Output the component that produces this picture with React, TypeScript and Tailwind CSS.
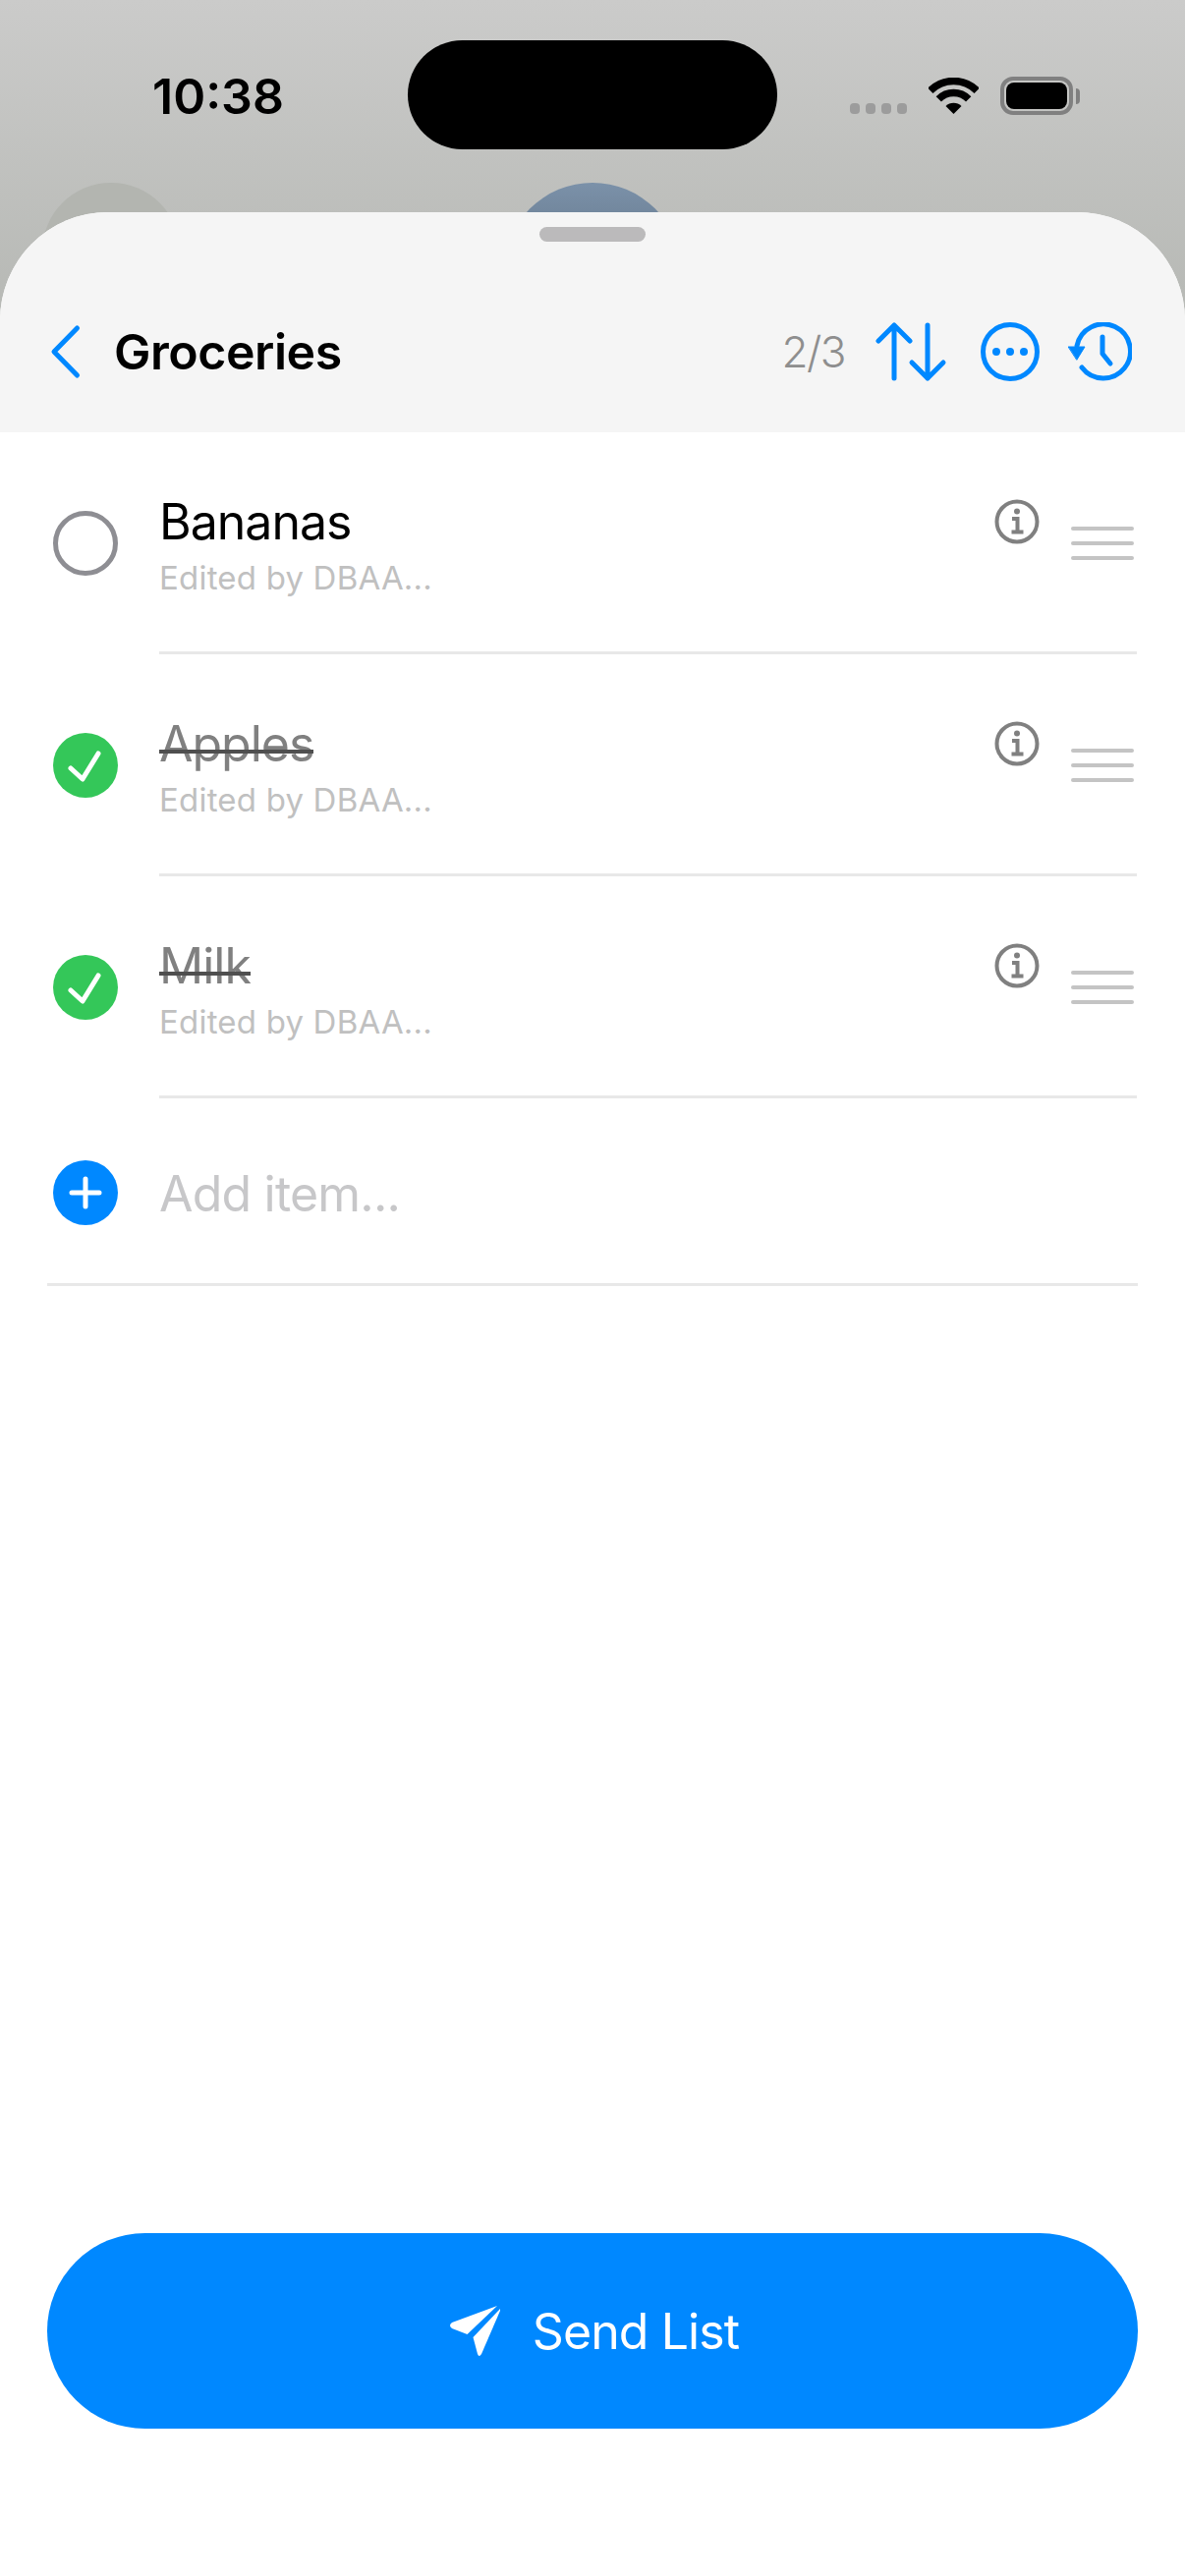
const items = [
	{ name: 'Bananas', done: false },
	{ name: 'Apples', done: true },
	{ name: 'Milk', done: true },
]

function Wifi() {
	return (
		<svg width="51" height="37" viewBox="0 0 51 37" fill="none" stroke="black" strokeWidth="7.5">
			<path d="M1.8 13.3 A33.5 33.5 0 0 1 49.2 13.3" />
			<path d="M10.3 21.8 A21.5 21.5 0 0 1 40.7 21.8" />
			<path d="M17.5 29 A11.3 11.3 0 0 1 33.5 29 L25.5 37 Z" fill="black" stroke="none" />
		</svg>
	)
}

function StatusBar() {
	return (
		<div className="relative h-[216px] shrink-0">
			<div className="absolute left-[43px] top-[186px] h-[140px] w-[140px] rounded-full bg-[#b3b5b0]" />
			<div className="absolute left-[513px] top-[186px] h-[180px] w-[180px] rounded-full bg-gradient-to-b from-[#7b91a9] to-[#4a5a68]" />
			<div className="relative flex items-start pl-[155px] pt-[41px]">
				<div className="w-[260px] pt-[27px] text-[50px] leading-[60px] font-semibold text-black">10:38</div>
				<div className="h-[111px] w-[376px] rounded-[56px] bg-black" />
				<div className="ml-[74px] flex gap-[6px] pt-[64px]">
					{[0, 1, 2, 3].map((i) => (
						<div key={i} className="h-[11px] w-[10px] rounded-[4px] bg-[#9c9c9c]" />
					))}
				</div>
				<div className="ml-[22px] pt-[38px]">
					<Wifi />
				</div>
				<div className="ml-[22px] flex items-center pt-[37px]">
					<div className="h-[39px] w-[74px] rounded-[13px] border-[4px] border-[#808080] p-[2px]">
						<div className="h-full w-full rounded-[8px] bg-black" />
					</div>
					<div className="ml-[3px] h-[16px] w-[4px] rounded-r-[4px] bg-[#808080]" />
				</div>
			</div>
		</div>
	)
}

function Header() {
	return (
		<div className="flex h-[224px] shrink-0 flex-col rounded-t-[110px] bg-[#f5f5f5]">
			<div className="mx-auto mt-[15px] h-[15px] w-[108px] rounded-full bg-[#bbbabb]" />
			<div className="flex items-center pt-[81px] pl-[49px]">
				<svg width="36" height="56" viewBox="0 0 36 56" fill="none" stroke="#0088ff" strokeWidth="5" strokeLinecap="round" strokeLinejoin="round">
					<path d="M29.5 4 L6 28 L29.5 52" />
				</svg>
				<div className="ml-[31px] flex-1 text-[50px] leading-[60px] font-semibold tracking-[-0.45px] text-black">Groceries</div>
				<div className="text-[44px] leading-[54px] font-light tracking-[-1.5px] text-[#8e8e8e]">2/3</div>
				<svg className="ml-[31px]" width="76" height="62" viewBox="0 0 76 62" fill="none" stroke="#0088ff" strokeWidth="5" strokeLinecap="round" strokeLinejoin="round">
					<path d="M19 58 V4 M3 20 L19 4 L35 20" />
					<path d="M53 4 V58 M37 42 L53 58 L69 42" />
				</svg>
				<svg className="ml-[31px]" width="60" height="60" viewBox="0 0 60 60" fill="none">
					<circle cx="30" cy="30" r="27.5" stroke="#0088ff" strokeWidth="5" />
					<circle cx="16" cy="30" r="4" fill="#0088ff" />
					<circle cx="30" cy="30" r="4" fill="#0088ff" />
					<circle cx="44" cy="30" r="4" fill="#0088ff" />
				</svg>
				<svg className="ml-[29px] mr-[54px]" width="65" height="60" viewBox="0 0 65 60" fill="none" stroke="#0088ff" strokeWidth="5" strokeLinecap="round" strokeLinejoin="round">
					<path d="M9 24 A27.5 27.5 0 1 1 14 46" />
					<path d="M0.5 25 L17 25 L9 38 Z" fill="#0088ff" strokeWidth="1" />
					<path d="M35 15 V32 L43 42" />
				</svg>
			</div>
		</div>
	)
}

function Row({ name, done }: { name: string; done: boolean }) {
	return (
		<div className="flex h-[226px] items-center pl-[54px]">
			{done ? (
				<div className="flex h-[66px] w-[66px] shrink-0 items-center justify-center rounded-full bg-[#34c759]">
					<svg width="36" height="36" viewBox="0 0 36 36" fill="none" stroke="white" strokeWidth="5" strokeLinecap="round" strokeLinejoin="round">
						<path d="M3 21 L15 32 L31 6" />
					</svg>
				</div>
			) : (
				<div className="h-[66px] w-[66px] shrink-0 rounded-full border-[5px] border-[#8e8e93]" />
			)}
			<div className="ml-[42px] mr-[49px] flex h-full flex-1 items-start border-b-[3px] border-[#e8e8e8]">
				<div className="flex-1 pt-[61px]">
					<div className="relative w-fit text-[50px] leading-[60px] tracking-[-1px]">
						<span className={done ? 'text-[#808080]' : 'text-black'}>{name}</span>
						{done && <div className="absolute left-0 right-0 top-[36px] h-[4px] bg-[#4f4f4f]" />}
					</div>
					<div className="mt-[7px] text-[33px] leading-[40px] tracking-[0.2px] text-[#c0c0c0]">Edited by DBAA...</div>
				</div>
				<svg className="mt-[68px]" width="46" height="46" viewBox="0 0 46 46" fill="none" stroke="#808080">
					<circle cx="23" cy="23" r="20.5" strokeWidth="4" />
					<circle cx="23" cy="12.5" r="3" fill="#808080" stroke="none" />
					<path d="M18 20 H23.5 V33 M17.5 33.5 H29.5" strokeWidth="4" />
				</svg>
				<div className="mt-[96px] mr-[3px] ml-[32px] flex w-[64px] flex-col gap-[11px]">
					<div className="h-[4px] rounded-full bg-[#c4c4c4]" />
					<div className="h-[4px] rounded-full bg-[#c4c4c4]" />
					<div className="h-[4px] rounded-full bg-[#c4c4c4]" />
				</div>
			</div>
		</div>
	)
}

export default function App() {
	return (
		<div className="flex h-[2622px] w-[1206px] flex-col overflow-hidden bg-gradient-to-b from-[#cbcbca] to-[#b6b8b4] bg-[length:100%_330px] bg-no-repeat font-['Inter',sans-serif]">
			<StatusBar />
			<div className="relative flex flex-1 flex-col rounded-t-[110px] bg-white">
				<Header />
				<div>
					{items.map((item) => (
						<Row key={item.name} name={item.name} done={item.done} />
					))}
				</div>
				<div className="mx-[48px] flex h-[191px] items-center border-b-[3px] border-[#e8e8e8] pt-[3px] pl-[6px]">
					<div className="flex h-[66px] w-[66px] items-center justify-center rounded-full bg-[#0088ff]">
						<svg width="34" height="34" viewBox="0 0 34 34" fill="none" stroke="white" strokeWidth="5" strokeLinecap="round">
							<path d="M17 3 V31 M3 17 H31" />
						</svg>
					</div>
					<div className="ml-[42px] pt-[2px] text-[50px] leading-[60px] tracking-[-0.8px] text-[#c7c7c9]">Add item...</div>
				</div>
				<div className="mx-[48px] mt-auto mb-[150px] flex h-[199px] items-center justify-center rounded-[100px] bg-[#0088ff] pl-[3px]">
					<svg width="52" height="53" viewBox="0 0 52 53" fill="white">
						<path d="M49 1 L3 18 Q-1 21 3 24 L18.5 30 Z" />
						<path d="M52 4 L24.5 33 L29 50 Q30.5 54 33 50 L52 6 Z" />
					</svg>
					<div className="ml-[33px] text-[50px] leading-[60px] tracking-[-0.9px] text-white">Send List</div>
				</div>
			</div>
		</div>
	)
}
